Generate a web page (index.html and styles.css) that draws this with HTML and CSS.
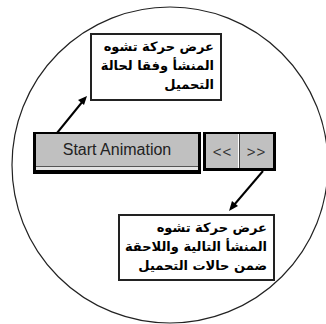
FILE: index.html
```html
<!DOCTYPE html>
<html lang="ar">
<head>
<meta charset="utf-8">
<link rel="stylesheet" href="styles.css">
</head>
<body>
<div class="canvas">
  <svg class="lines" width="326" height="324" viewBox="0 0 326 324">
    <ellipse cx="170" cy="165" rx="158" ry="158" fill="none" stroke="#222" stroke-width="1.2"/>
    <line x1="57" y1="133" x2="83" y2="101" stroke="#000" stroke-width="2"/>
    <polygon points="87,96 78,100 84,105" fill="#000"/>
    <line x1="263" y1="171" x2="234" y2="205" stroke="#000" stroke-width="2"/>
    <polygon points="229,211 232,201 238,206" fill="#000"/>
  </svg>

  <div class="note note-top" dir="rtl">
    <div>عرض حركة تشوه</div>
    <div>المنشأ وفقا لحالة</div>
    <div>التحميل</div>
  </div>

  <div class="toolbar">
    <div class="start">Start Animation</div>
    <div class="nav">
      <div class="navbtn">&lt;&lt;</div>
      <div class="navbtn last">&gt;&gt;</div>
    </div>
  </div>

  <div class="note note-bottom" dir="rtl">
    <div>عرض حركة تشوه</div>
    <div>المنشأ التالية واللاحقة</div>
    <div>ضمن حالات التحميل</div>
  </div>
</div>
</body>
</html>
```

FILE: styles.css
```css
html, body {
  margin: 0;
  padding: 0;
  background: #fff;
}
.canvas {
  position: relative;
  width: 326px;
  height: 324px;
  overflow: hidden;
}
.lines {
  position: absolute;
  left: 0;
  top: 0;
}
.note {
  position: absolute;
  box-sizing: border-box;
  border: 2px solid #222;
  background: #fff;
  font-family: "DejaVu Sans", sans-serif;
  font-weight: bold;
  font-size: 13px;
  line-height: 19px;
  color: #000;
  text-align: right;
  white-space: nowrap;
  padding: 2px 6px 0 1px;
}
.note-top {
  left: 90px;
  top: 33px;
  width: 132px;
  height: 68px;
}
.note-bottom {
  left: 118px;
  top: 214px;
  width: 157px;
  height: 67px;
}
.toolbar {
  position: absolute;
  left: 33px;
  top: 132px;
  display: flex;
  gap: 2px;
  align-items: flex-start;
}
.start {
  box-sizing: border-box;
  width: 168px;
  height: 42px;
  border: 3px solid #000;
  border-top-width: 2px;
  border-bottom-width: 4px;
  background: #c0c0c0;
  box-shadow: inset 0 -3px 0 #e4e4e4, inset 0 -4px 0 #555;
  font-family: "Liberation Sans", Arial, sans-serif;
  font-size: 16px;
  color: #222;
  display: flex;
  align-items: center;
  justify-content: center;
  padding-bottom: 4px;
}
.nav {
  box-sizing: border-box;
  width: 73px;
  height: 39px;
  border: 3px solid #000;
  border-top-width: 2px;
  display: flex;
  background: #c0c0c0;
}
.navbtn {
  flex: 1;
  display: flex;
  align-items: center;
  justify-content: center;
  font-family: "Liberation Sans", Arial, sans-serif;
  font-size: 15px;
  color: #333;
  letter-spacing: 1px;
  border-right: 1px solid #444;
  box-shadow: inset -1px 0 0 #fff;
}
.navbtn.last {
  border-right: none;
  box-shadow: none;
}
```
